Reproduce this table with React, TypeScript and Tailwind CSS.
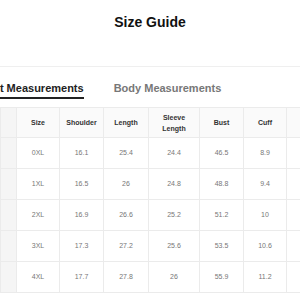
const columns = ["Size", "Shoulder", "Length", "Sleeve Length", "Bust", "Cuff"];

const rows = [
  ["0XL", "16.1", "25.4", "24.4", "46.5", "8.9"],
  ["1XL", "16.5", "26", "24.8", "48.8", "9.4"],
  ["2XL", "16.9", "26.6", "25.2", "51.2", "10"],
  ["3XL", "17.3", "27.2", "25.6", "53.5", "10.6"],
  ["4XL", "17.7", "27.8", "26", "55.9", "11.2"],
];

// widths of the visible columns, first and last are cut by the frame
const widths = ["w-[16px]", "w-[43px]", "w-[44px]", "w-[45px]", "w-[51px]", "w-[44px]", "w-[43px]", "w-[14px]"];

export default function App() {
  return (
    <div
      className="w-[300px] h-[300px] overflow-hidden bg-white"
      style={{ fontFamily: "'Liberation Sans', Arial, sans-serif" }}
    >
      <div className="h-[67px] border-b border-[#efefef] pt-[14px] text-center">
        <h1 className="text-[14px] leading-[16px] font-bold text-[#111]">Size Guide</h1>
      </div>

      <div className="h-[40px] flex items-start gap-[30px] ml-[-38px] pt-[15px]">
        <div className="text-[11px] leading-[13px] font-bold text-[#222] pb-[2px] border-b-2 border-[#222] whitespace-nowrap">
          Product Measurements
        </div>
        <div className="text-[11px] leading-[13px] font-bold text-[#777] whitespace-nowrap">
          Body Measurements
        </div>
      </div>

      <table className="border-collapse table-fixed w-[300px]">
        <colgroup>
          {widths.map((w, i) => (
            <col key={i} className={w} />
          ))}
        </colgroup>
        <thead>
          <tr className="h-[30px] bg-[#fafafa]">
            <th className="border border-[#ebebeb] bg-[#f5f5f5]" />
            {columns.map((c) => (
              <th
                key={c}
                className="border border-[#ebebeb] text-[7px] leading-[11px] font-bold text-[#333] px-[6px] text-center"
              >
                {c}
              </th>
            ))}
            <th className="border border-[#ebebeb]" />
          </tr>
        </thead>
        <tbody>
          {rows.map((r) => (
            <tr key={r[0]} className="h-[31px]">
              <td className="border border-[#ebebeb] bg-[#f5f5f5]" />
              {r.map((v, i) => (
                <td key={i} className="border border-[#ebebeb] text-[7px] text-[#777] text-center">
                  {v}
                </td>
              ))}
              <td className="border border-[#ebebeb]" />
            </tr>
          ))}
        </tbody>
      </table>
    </div>
  );
}
